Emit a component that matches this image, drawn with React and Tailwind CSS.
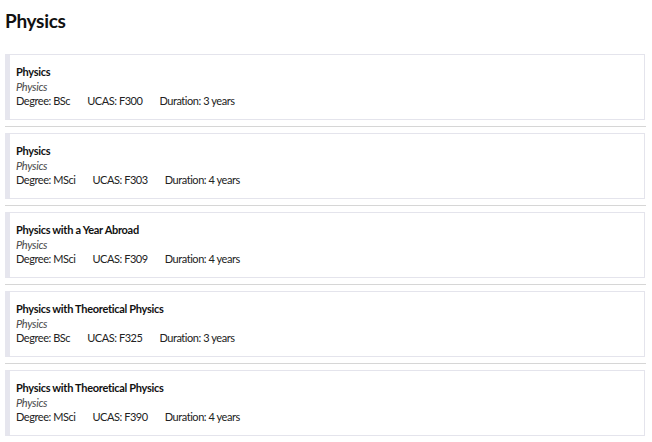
import React from "react";

const courses = [
  { name: "Physics", dept: "Physics", degree: "BSc", ucas: "F300", dur: "3 years" },
  { name: "Physics", dept: "Physics", degree: "MSci", ucas: "F303", dur: "4 years" },
  { name: "Physics with a Year Abroad", dept: "Physics", degree: "MSci", ucas: "F309", dur: "4 years" },
  { name: "Physics with Theoretical Physics", dept: "Physics", degree: "BSc", ucas: "F325", dur: "3 years" },
  { name: "Physics with Theoretical Physics", dept: "Physics", degree: "MSci", ucas: "F390", dur: "4 years" },
];

export default function App() {
  return (
    <div className="w-[652px] h-[442px] overflow-hidden bg-white px-[5px] pt-[8px]" style={{ fontFamily: "Lato, 'Liberation Sans', sans-serif" }}>
      <h1 className="text-[19px] font-bold text-[#111] leading-[26px] tracking-[-0.3px]">Physics</h1>
      <div className="mt-[20px] w-[640px]">
        {courses.map((c, i) => (
          <div key={i}>
            {i > 0 && <div className="h-px bg-[#d6d6d6] my-[6px] w-[641px]" />}
            <div className="border border-[#e4e4ec] border-l-[5px] border-l-[#e6e6ee] h-[66px] pl-[6px] pt-[10px] text-[11px] leading-[14.5px] tracking-[-0.3px] text-[#222]">
              <div className="font-bold text-[#111]">{c.name}</div>
              <div className="italic text-[#4a4a4a]">{c.dept}</div>
              <div className="flex gap-[17px] tracking-[-0.45px]">
                <span>Degree: {c.degree}</span>
                <span>UCAS: {c.ucas}</span>
                <span>Duration: {c.dur}</span>
              </div>
            </div>
          </div>
        ))}
      </div>
    </div>
  );
}
